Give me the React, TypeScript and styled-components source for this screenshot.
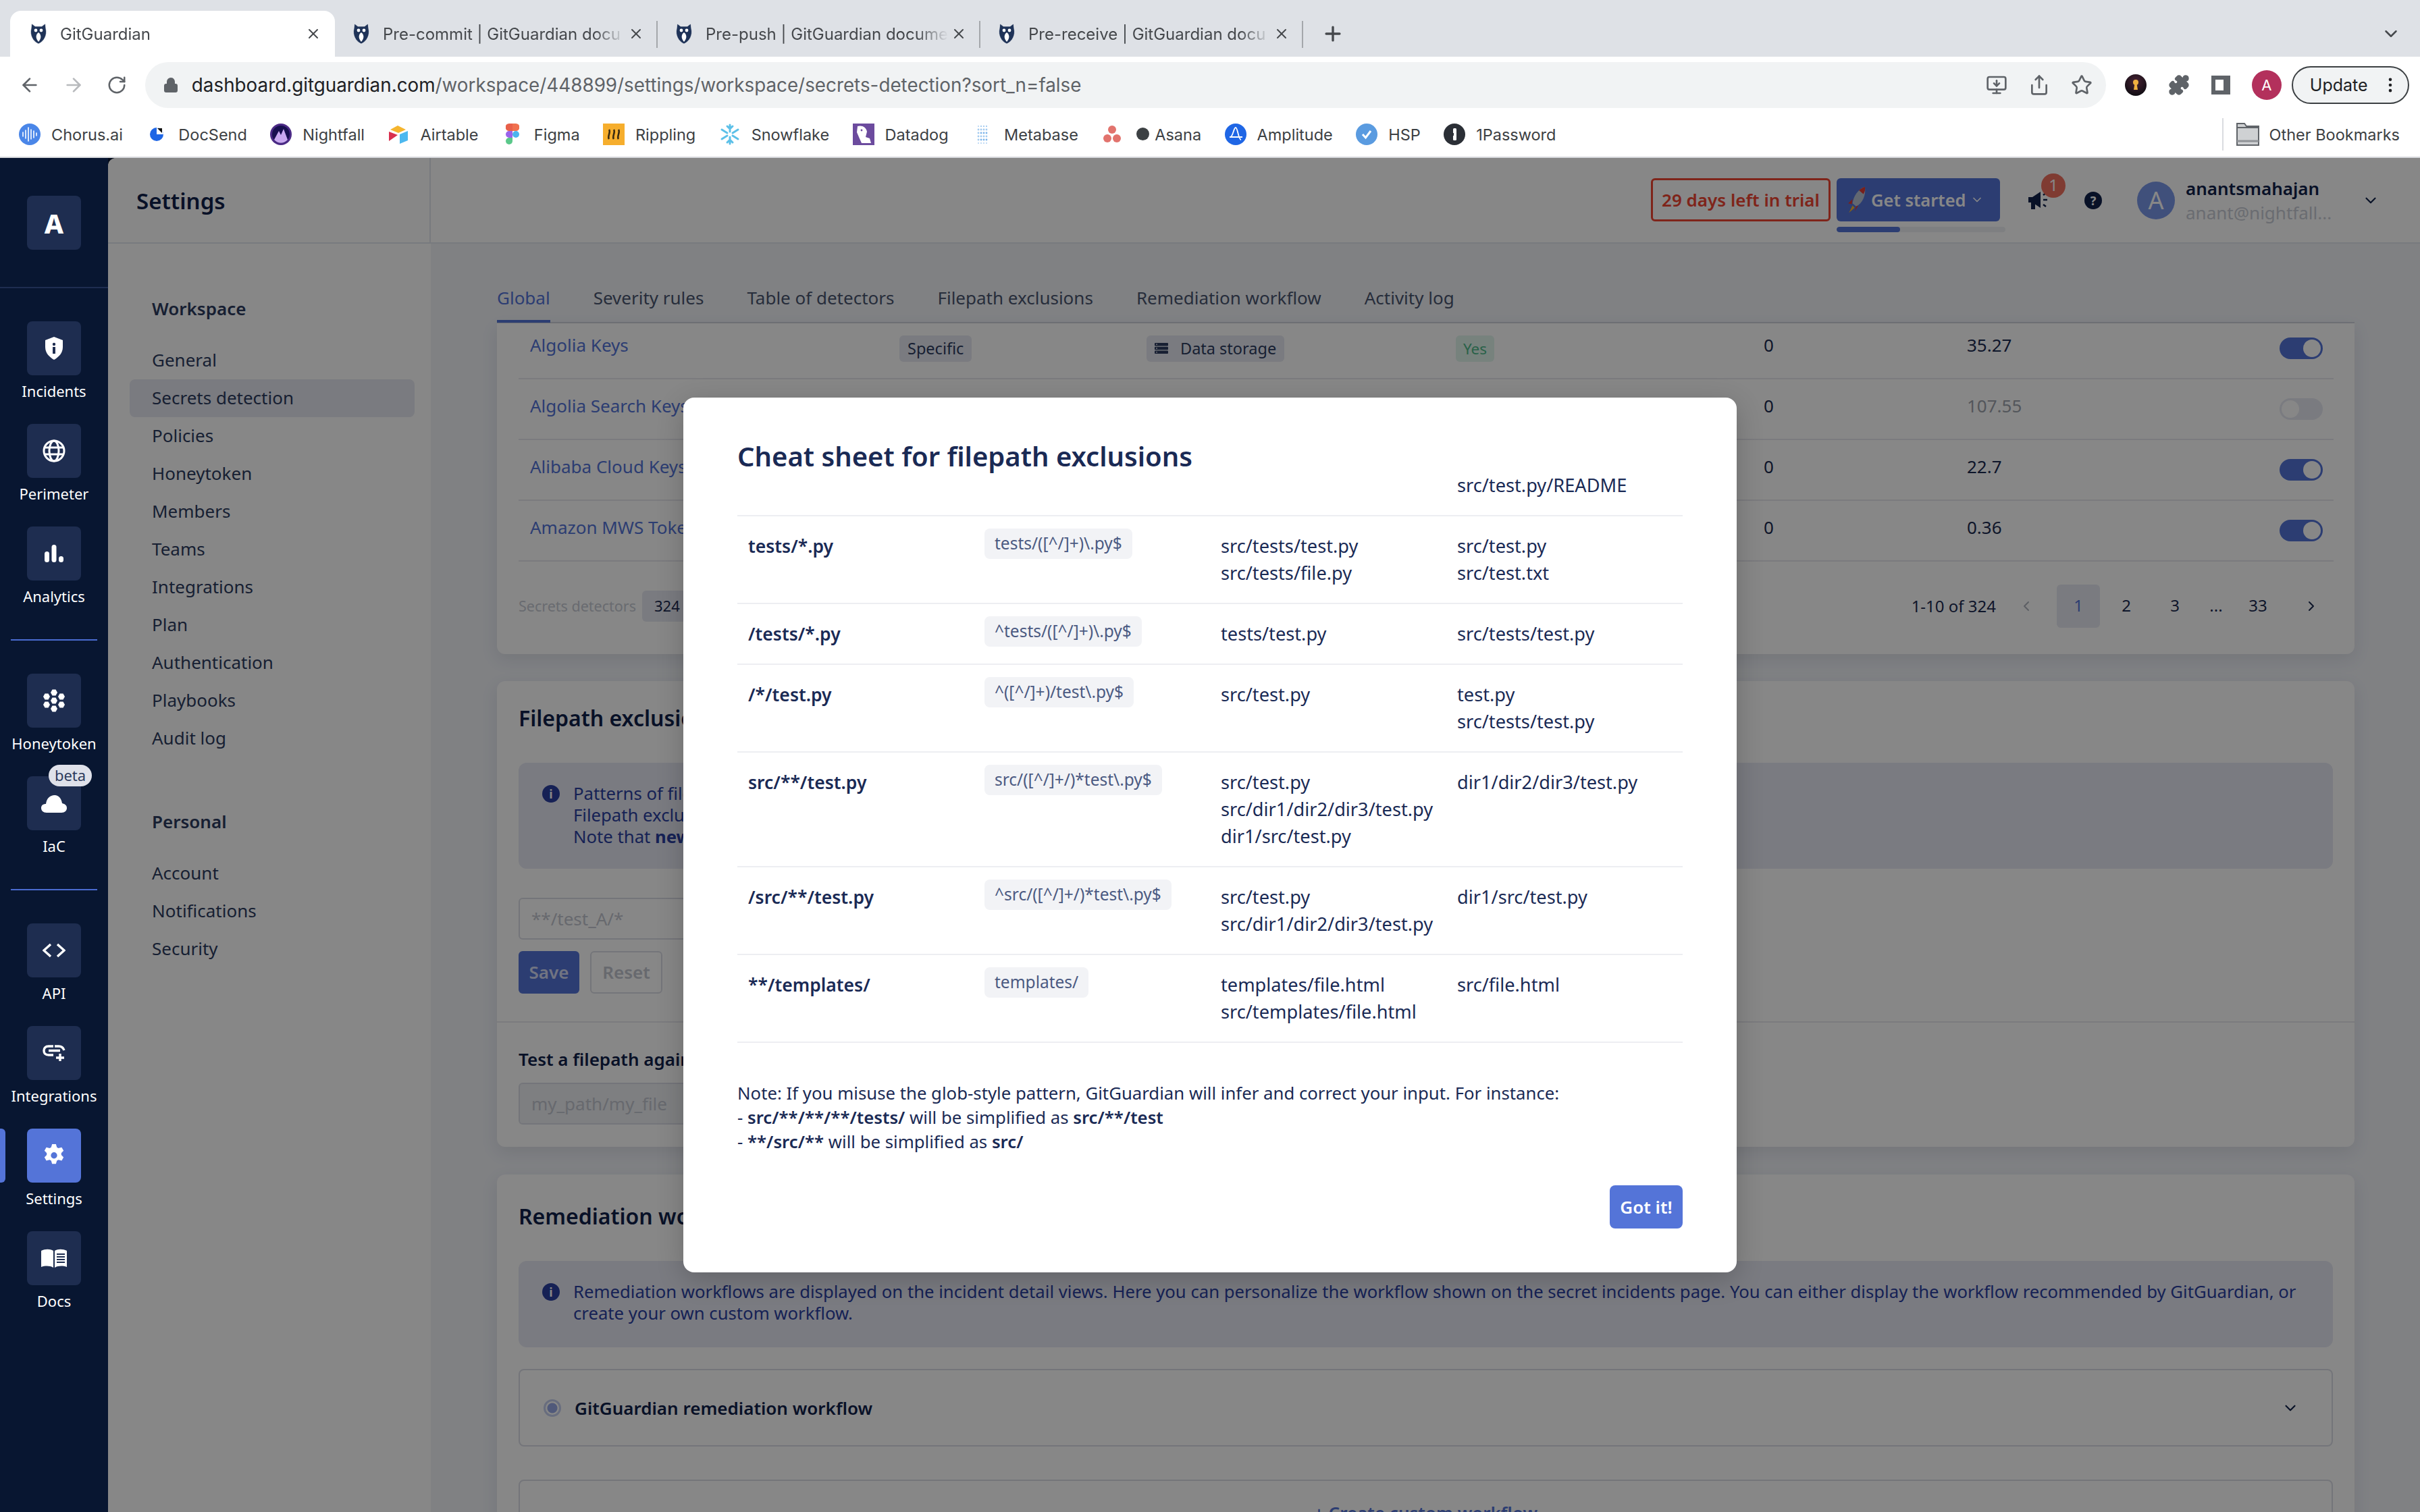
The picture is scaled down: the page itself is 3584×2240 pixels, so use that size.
import * as React from 'react';
import styled, { createGlobalStyle } from 'styled-components';
import { ArrowLeft, ArrowRight, RotateCw, Lock, X, Plus, ChevronDown, ChevronLeft, ChevronRight, Star, Share, MonitorDown, Puzzle, MoreVertical } from 'lucide-react';

const Global = createGlobalStyle`
  html, body { margin: 0; padding: 0; background: #fff; }
  * { box-sizing: border-box; }
`;

const sans = `"Noto Sans", "Open Sans", sans-serif`;
const chromeFont = `Inter, "Liberation Sans", sans-serif`;

const Page = styled.div`
  width: 3584px;
  height: 2240px;
  overflow: hidden;
  display: flex;
  flex-direction: column;
  font-family: ${sans};
`;

/* browser chrome */
const TabStrip = styled.div`
  height: 84px;
  background: #dee1e6;
  padding: 16px 28px 0 15px;
  display: flex;
  align-items: stretch;
  flex-shrink: 0;
`;
const Tab = styled.div<{ $active?: boolean; $sep?: boolean }>`
  position: relative;
  width: ${(p) => (p.$active ? '481px' : '478px')};
  display: flex;
  align-items: center;
  padding: 0 20px 0 ${(p) => (p.$active ? '29px' : '26px')};
  font: 24px ${chromeFont};
  color: #45484c;
  background: ${(p) => (p.$active ? '#fff' : 'transparent')};
  border-radius: 16px 16px 0 0;
  ${(p) => p.$sep && `
    &::after {
      content: '';
      position: absolute;
      right: 0;
      top: 15px;
      height: 40px;
      width: 2px;
      background: #a4a7ab;
    }
  `}
`;
const TabTitle = styled.span`
  flex: 1;
  margin-left: 19px;
  white-space: nowrap;
  -webkit-mask-image: linear-gradient(90deg, #000 86%, transparent 99%);
`;
const NewTab = styled.div`
  width: 90px;
  display: flex;
  align-items: center;
  padding-left: 27px;
  color: #45484c;
`;
const TabListEnd = styled.div`
  margin-left: auto;
  display: flex;
  align-items: center;
  color: #45484c;
`;

const Toolbar = styled.div`
  height: 76px;
  background: #fff;
  padding: 8px 16px 8px 28px;
  display: flex;
  align-items: flex-start;
  flex-shrink: 0;
`;
const NavButtons = styled.div`
  width: 188px;
  height: 68px;
  display: flex;
  align-items: center;
  gap: 33px;
  color: #5f6368;
`;
const Omnibox = styled.div`
  flex: 0 0 2904px;
  height: 68px;
  border-radius: 34px;
  background: #f1f3f4;
  display: flex;
  align-items: center;
  padding: 0 20px 0 26px;
  color: #5f6368;
  font: 27.8px ${chromeFont};
`;
const UrlText = styled.div`
  margin-left: 19px;
  flex: 1;
  white-space: nowrap;
  color: #5f6368;
  b {
    font-weight: 400;
    color: #202124;
  }
`;
const OmniIcons = styled.div`
  display: flex;
  align-items: center;
  gap: 31px;
`;
const ToolIcons = styled.div`
  height: 68px;
  margin-left: 28px;
  display: flex;
  align-items: center;
  gap: 32px;
  color: #5f6368;
`;
const PanelIcon = styled.div`
  width: 28px;
  height: 28px;
  border: 6px solid #5f6368;
  border-right-width: 10px;
  background: #fff;
`;
const ChromeAvatar = styled.div`
  width: 44px;
  height: 44px;
  border-radius: 50%;
  background: #b3305c;
  color: #fff;
  display: flex;
  align-items: center;
  justify-content: center;
  font: 22px ${chromeFont};
`;
const UpdatePill = styled.div`
  height: 56px;
  width: 175px;
  margin: 6px 0 0 15px;
  border: 2px solid #3c4043;
  border-radius: 28px;
  background: #f1f3f4;
  display: flex;
  align-items: center;
  justify-content: space-between;
  padding: 0 12px 0 25px;
  font: 25px ${chromeFont};
  color: #202124;
`;

const Bookmarks = styled.div`
  height: 74px;
  padding: 6px 30px 0 28px;
  background: #fff;
  border-bottom: 2px solid #d6d8dc;
  display: flex;
  align-items: center;
  font: 23.5px ${chromeFont};
  color: #3c4043;
  flex-shrink: 0;
`;
const Bookmark = styled.div`
  display: flex;
  align-items: center;
  gap: 16px;
  margin-right: 34.4px;
  white-space: nowrap;
`;
const IconSlot = styled.span`
  width: 32px;
  height: 32px;
  display: flex;
  align-items: center;
  justify-content: center;
`;
const OtherBookmarks = styled.div`
  margin-left: auto;
  height: 48px;
  padding-left: 19px;
  border-left: 2px solid #dadce0;
  display: flex;
  align-items: center;
  gap: 15px;
  white-space: nowrap;
`;

/* app */
const Body = styled.div`
  flex: 1;
  min-height: 0;
  position: relative;
  display: flex;
  background: #081631;
`;
const Sidebar = styled.nav`
  width: 160px;
  flex-shrink: 0;
  position: relative;
  z-index: 3;
  background: #081631;
`;
const LogoArea = styled.div`
  height: 193px;
  padding-top: 56px;
  display: flex;
  justify-content: center;
  border-bottom: 2px solid #1e2d50;
`;
const LogoBox = styled.div`
  width: 80px;
  height: 80px;
  border-radius: 8px;
  background: #1e2d50;
  color: #fff;
  display: flex;
  align-items: center;
  justify-content: center;
  font: 800 40px ${sans};
`;
const SideGroup = styled.div<{ $last?: boolean }>`
  padding: 49px 0 41px;
  display: flex;
  flex-direction: column;
  gap: 24px;
  position: relative;
  ${(p) => !p.$last && `
    &::after {
      content: '';
      position: absolute;
      left: 16px;
      right: 16px;
      bottom: 0;
      height: 2px;
      background: #4a6bd0;
    }
  `}
`;
const SideItem = styled.a`
  position: relative;
  height: 128px;
  display: flex;
  flex-direction: column;
  align-items: center;
`;
const SideIcon = styled.div<{ $active?: boolean }>`
  width: 80px;
  height: 80px;
  border-radius: 8px;
  background: ${(p) => (p.$active ? '#5474d8' : '#1e2d50')};
  display: flex;
  align-items: center;
  justify-content: center;
  color: #fff;
`;
const SideLabel = styled.span`
  height: 48px;
  line-height: 46px;
  font-size: 22px;
  color: #fff;
  white-space: nowrap;
`;
const ActiveMark = styled.span`
  position: absolute;
  left: 0;
  top: 0;
  width: 8px;
  height: 80px;
  border-radius: 0 6px 6px 0;
  background: #5474d8;
`;
const BetaBadge = styled.span`
  position: absolute;
  top: -17px;
  right: 24px;
  width: 64px;
  height: 32px;
  border-radius: 16px;
  background: #dfe1ea;
  color: #2c3a5c;
  font-size: 22px;
  line-height: 30px;
  text-align: center;
`;

const Main = styled.div`
  flex: 1;
  min-width: 0;
  display: flex;
  flex-direction: column;
  background: #f1f3f8;
  border-radius: 12px 0 0 0;
  overflow: hidden;
`;
const TopBar = styled.header`
  height: 127px;
  flex-shrink: 0;
  display: flex;
  background: #fff;
  border-bottom: 2px solid #e3e6ee;
`;
const TopBarTitle = styled.div`
  width: 478px;
  border-right: 2px solid #e3e6ee;
  padding: 2px 0 0 42px;
  display: flex;
  align-items: center;
  font-weight: 600;
  font-size: 33px;
  color: #10214a;
`;
const TopBarRight = styled.div`
  flex: 1;
  position: relative;
  display: flex;
  align-items: center;
  padding: 0 34px 0 1807px;
`;
const TrialBox = styled.div`
  width: 266px;
  height: 64px;
  margin-top: -1px;
  border: 3px solid #f04432;
  border-radius: 6px;
  color: #f04432;
  font-weight: 600;
  font-size: 26px;
  display: flex;
  align-items: center;
  justify-content: center;
  white-space: nowrap;
`;
const StartWrap = styled.div`
  position: relative;
  margin-left: 9px;
  width: 242px;
  height: 64px;
  margin-top: -1px;
`;
const StartButton = styled.div`
  height: 64px;
  border-radius: 6px;
  background: #5474d8;
  color: #fff;
  font-weight: 600;
  font-size: 25.5px;
  display: flex;
  align-items: center;
  padding-left: 15px;
  gap: 6px;
  white-space: nowrap;
`;
const Progress = styled.div`
  position: absolute;
  left: 0;
  top: 72px;
  width: 250px;
  height: 8px;
  border-radius: 4px;
  overflow: hidden;
  background: #eef0f3;
`;
const ProgressFill = styled.div`
  height: 100%;
  background: #5474d8;
  border-radius: 4px;
`;
const Megaphone = styled.div`
  position: relative;
  margin-left: 42px;
  color: #10214a;
  display: flex;
`;
const CountBadge = styled.span`
  position: absolute;
  left: 19px;
  top: -26px;
  width: 36px;
  height: 36px;
  border-radius: 50%;
  background: #f0705f;
  color: #fff;
  font-size: 24px;
  line-height: 34px;
  text-align: center;
`;
const HelpDot = styled.div`
  margin-left: 53px;
  width: 26px;
  height: 26px;
  border-radius: 50%;
  background: #10214a;
  color: #fff;
  font-weight: 700;
  font-size: 18px;
  line-height: 26px;
  text-align: center;
`;
const UserAvatar = styled.div`
  margin-left: 52px;
  width: 56px;
  height: 56px;
  border-radius: 50%;
  background: #7a97e8;
  color: #fff;
  font-size: 36px;
  line-height: 56px;
  text-align: center;
`;
const UserText = styled.div`
  margin-left: 16px;
  width: 261px;
  line-height: 36px;
  white-space: nowrap;
`;
const UserName = styled.div`
  font-weight: 600;
  font-size: 26px;
  color: #10214a;
`;
const UserMail = styled.div`
  font-size: 26px;
  color: #c8ccd6;
`;

const Columns = styled.div`
  flex: 1;
  min-height: 0;
  display: flex;
`;
const SideMenu = styled.aside`
  width: 478px;
  flex-shrink: 0;
  background: #fff;
  padding: 69px 24px 0 32px;
`;
const MenuHeading = styled.div<{ $gap?: boolean }>`
  height: 56px;
  line-height: 54px;
  padding-left: 33px;
  margin: ${(p) => (p.$gap ? '68px' : '0')} 0 20px;
  font-weight: 600;
  font-size: 26px;
  color: #2d3c5f;
`;
const MenuItem = styled.div<{ $active?: boolean }>`
  height: 56px;
  line-height: 54px;
  padding-left: 33px;
  border-radius: 8px;
  font-size: 26px;
  color: #2d3c5f;
  background: ${(p) => (p.$active ? '#e6e8f1' : 'transparent')};
`;
const Content = styled.div`
  flex: 1;
  min-width: 0;
  padding: 0 97px 0 98px;
  background: #f1f3f8;
`;
const TabsBar = styled.div`
  height: 118px;
  display: flex;
  align-items: flex-end;
  gap: 64px;
  border-bottom: 2px solid #d3d6df;
`;
const PageTab = styled.div<{ $active?: boolean }>`
  height: 59px;
  line-height: 44px;
  margin-bottom: -1px;
  font-size: 26px;
  white-space: nowrap;
  color: ${(p) => (p.$active ? '#5474d8' : '#4a5670')};
  border-bottom: 4px solid ${(p) => (p.$active ? '#5474d8' : 'transparent')};
`;
const Card = styled.section`
  background: #fff;
  border-radius: 12px;
  box-shadow: 0 8px 24px rgba(30, 45, 80, 0.1);
`;
const RulesCard = styled(Card)`
  height: 490px;
  padding: 0 31px 0 32px;
  border-radius: 0 0 12px 12px;
  overflow: hidden;
`;
const RowsClip = styled.div`
  margin-top: -7px;
`;
const Row = styled.div`
  height: 90px;
  display: grid;
  grid-template-columns: 564px 366px 462px 452px 301px 1fr auto;
  align-items: center;
  border-bottom: 2px solid #e8e9ee;
  padding-right: 16px;
  font-size: 26px;
  color: #1b2a50;
`;
const Cell = styled.div<{ $muted?: boolean }>`
  padding-bottom: 10px;
  white-space: nowrap;
  color: ${(p) => (p.$muted ? '#9ea3ad' : 'inherit')};
`;
const NameCell = styled(Cell)`
  padding-left: 17px;
  color: #5474d8;
`;
const TagCell = styled.div``;
const Tag = styled.span<{ $green?: boolean }>`
  display: inline-flex;
  align-items: center;
  gap: 18px;
  height: 39px;
  padding: 0 ${(p) => (p.$green ? '11px' : '12px')};
  margin-left: ${(p) => (p.$green ? '-4px' : '0')};
  border-radius: 6px;
  font-size: ${(p) => (p.$green ? '22.5px' : '23.5px')};
  background: ${(p) => (p.$green ? '#e0f5ec' : '#e6e8f1')};
  color: ${(p) => (p.$green ? '#4fb98a' : '#2d3c5f')};
`;
const Toggle = styled.div<{ $on?: boolean }>`
  width: 64px;
  height: 32px;
  padding: 3px;
  border-radius: 16px;
  display: flex;
  justify-content: ${(p) => (p.$on ? 'flex-end' : 'flex-start')};
  background: ${(p) => (p.$on ? '#5474d8' : '#e6e8f1')};
  &::after {
    content: '';
    width: 26px;
    height: 26px;
    border-radius: 50%;
    background: #fff;
  }
`;
const Pager = styled.div`
  height: 137px;
  padding-bottom: 6px;
  display: flex;
  align-items: center;
  font-size: 24px;
  color: #1b2a50;
`;
const PagerLabel = styled.span`
  font-size: 21.5px;
  color: #c6cad3;
`;
const CountChip = styled.span`
  margin-left: 9px;
  height: 46px;
  width: 100px;
  padding-left: 18px;
  line-height: 44px;
  border-radius: 6px;
  background: #e6e8f1;
  font-size: 22px;
`;
const PagerNav = styled.div`
  margin-left: auto;
  margin-right: -12px;
  display: flex;
  align-items: center;
`;
const PageNum = styled.span<{ $active?: boolean; $w: number }>`
  width: ${(p) => p.$w}px;
  height: 64px;
  line-height: 62px;
  text-align: center;
  border-radius: 6px;
  background: ${(p) => (p.$active ? '#e6e8f1' : 'transparent')};
  color: ${(p) => (p.$active ? '#5474d8' : 'inherit')};
`;
const PagerArrow = styled.span<{ $w: number; $dim?: boolean }>`
  width: ${(p) => p.$w}px;
  display: flex;
  justify-content: center;
  color: ${(p) => (p.$dim ? '#b0b4be' : 'inherit')};
`;

const ExclusionsCard = styled(Card)`
  margin-top: 40px;
  height: 690px;
`;
const CardBlock = styled.div`
  padding: 0 32px;
`;
const SectionTitle = styled.h2<{ $pt: number }>`
  margin: 0;
  padding-top: ${(p) => p.$pt}px;
  height: ${(p) => p.$pt + 90}px;
  line-height: 48px;
  font-weight: 600;
  font-size: 32px;
  color: #10214a;
  white-space: nowrap;
`;
const InfoBox = styled.div<{ $h: number }>`
  height: ${(p) => p.$h}px;
  border-radius: 12px;
  background: #e6e8f3;
  padding: 30px 32px 0 35px;
  display: flex;
  gap: 20px;
  font-size: 25.7px;
  line-height: 32px;
  color: #2a3fa0;
  strong {
    font-weight: 700;
  }
`;
const InfoDot = styled.span`
  flex-shrink: 0;
  margin-top: 3px;
  width: 26px;
  height: 26px;
  border-radius: 50%;
  background: #2a3fa0;
  color: #fff;
  font-size: 18px;
  font-weight: 700;
  line-height: 26px;
  text-align: center;
`;
const TextField = styled.div<{ $filled?: boolean }>`
  width: 1200px;
  height: 62px;
  padding-left: 17px;
  line-height: 58px;
  border: 2px solid #dcdee6;
  border-radius: 6px;
  font-size: 26px;
  color: #c3c6d0;
  background: ${(p) => (p.$filled ? '#eef0f4' : '#fff')};
`;
const FieldSpacer = styled.div`
  height: 43px;
`;
const Buttons = styled.div`
  display: flex;
  gap: 16px;
  margin-top: 17px;
`;
const FormButton = styled.div<{ $primary?: boolean }>`
  height: 63px;
  width: ${(p) => (p.$primary ? '90px' : '107px')};
  border-radius: 6px;
  font-size: 26px;
  font-weight: 600;
  line-height: 59px;
  text-align: center;
  color: ${(p) => (p.$primary ? '#d5dcf5' : '#c3c6d0')};
  background: ${(p) => (p.$primary ? '#5474d8' : '#fff')};
  border: 2px solid ${(p) => (p.$primary ? '#5474d8' : '#dcdee6')};
`;
const Divider = styled.div`
  margin-top: 41px;
  height: 2px;
  background: #e8e9ee;
`;
const FieldTitle = styled.div`
  margin-top: 32px;
  height: 44px;
  line-height: 44px;
  margin-bottom: 13px;
  font-weight: 600;
  font-size: 26px;
  color: #10214a;
`;
const WorkflowCard = styled(Card)`
  margin-top: 41px;
  height: 600px;
`;
const WorkflowBox = styled.div`
  margin-top: 32px;
  height: 115px;
  border: 2px solid #dcdee6;
  border-radius: 8px;
  display: flex;
  align-items: center;
  gap: 20px;
  padding: 0 48px 0 35px;
  font-weight: 600;
  font-size: 26px;
  color: #10214a;
  svg:last-child {
    margin-left: auto;
  }
`;
const CreateBox = styled.div`
  margin-top: 49px;
  height: 115px;
  border: 2px solid #dcdee6;
  border-radius: 8px;
  padding-top: 29px;
  text-align: center;
  font-weight: 600;
  font-size: 26px;
  color: #5474d8;
`;
const RadioMark = styled.span`
  width: 26px;
  height: 26px;
  border-radius: 50%;
  border: 3px solid #c5cfee;
  background: radial-gradient(circle, #98a9e6 0 7px, #fff 8px);
`;

/* modal */
const Overlay = styled.div`
  position: absolute;
  inset: 0;
  z-index: 2;
  background: rgba(0, 0, 0, 0.47);
  display: flex;
  align-items: center;
  justify-content: center;
`;
const Modal = styled.div`
  width: 1560px;
  height: 1296px;
  padding: 64px 80px;
  border-radius: 16px;
  background: #fff;
  color: #1a2a55;
  box-shadow: 0 10px 40px rgba(0, 0, 0, 0.2);
`;
const ModalTitle = styled.h2`
  margin: 0;
  height: 46px;
  line-height: 46px;
  font-size: 40px;
  font-weight: 600;
  color: #1a2a55;
`;
const SheetRow = styled.div`
  display: grid;
  grid-template-columns: repeat(4, 350px);
  padding-bottom: 24px;
  border-bottom: 2px solid #edeef2;
  font-size: 27.2px;
  line-height: 40px;
  & + & {
    padding-top: 24px;
  }
`;
const Pattern = styled.div`
  padding-left: 16px;
  font-size: 26.5px;
  font-weight: 600;
`;
const RegexCell = styled.div`
  padding-left: 16px;
`;
const Regex = styled.code`
  display: inline-block;
  margin-top: -6px;
  height: 45px;
  padding: 0 15px;
  line-height: 44px;
  border-radius: 8px;
  background: #f2f3f6;
  font-family: ${sans};
  font-size: 24.5px;
  color: #4b5a82;
  vertical-align: top;
`;
const PathCell = styled.div`
  padding-left: 16px;
  white-space: nowrap;
`;
const Note = styled.div`
  margin-top: 56px;
  font-size: 25.75px;
  line-height: 36px;
  strong {
    font-weight: 600;
  }
`;
const ModalFooter = styled.div`
  margin-top: 47px;
  display: flex;
  justify-content: flex-end;
`;
const GotIt = styled.button`
  width: 108px;
  height: 64px;
  border: 0;
  border-radius: 8px;
  background: #5474d8;
  color: #fff;
  font-family: ${sans};
  font-size: 26px;
  font-weight: 600;
`;

const Owl = () => (
  <svg width="26" height="30" viewBox="0 0 26 30">
    <path d="M3 0 L8 4 H18 L23 0 L24 8 C26 16 22 26 13 30 C4 26 0 16 2 8Z" fill="#1f3358" stroke="#fff" strokeWidth="0.6" />
    <path d="M13 13 C9 16 8 21 13 27 C18 21 17 16 13 13Z" fill="#fff" />
    <circle cx="9" cy="10" r="2.4" fill="#fff" />
    <circle cx="17" cy="10" r="2.4" fill="#fff" />
  </svg>
);

const ChorusIcon = () => (
  <svg width="32" height="32" viewBox="0 0 32 32">
    <circle cx="16" cy="16" r="16" fill="#4a86e8" />
    <path d="M6 13v6M10 10v12M14 6v20M18 9v14M22 11v10M26 14v4" stroke="#fff" strokeWidth="1.6" strokeLinecap="round" />
  </svg>
);
const DocSendIcon = () => (
  <svg width="20" height="32" viewBox="0 0 20 32">
    <circle cx="10" cy="16" r="10" fill="#1f66e5" />
    <path d="M10 6a10 10 0 0 1 10 10H10z" fill="#fff" />
    <path d="M11 7h7v7z" fill="#111" />
  </svg>
);
const NightfallIcon = () => (
  <svg width="32" height="32" viewBox="0 0 32 32">
    <circle cx="16" cy="16" r="16" fill="#4b2a86" />
    <circle cx="16" cy="16" r="13" fill="#181050" />
    <path d="M6 24 L13 11 L16 17 L20 8 L26 24 A13 13 0 0 1 6 24Z" fill="#c8a8f0" />
  </svg>
);
const AirtableIcon = () => (
  <svg width="30" height="32" viewBox="0 0 30 32">
    <path d="M14 3 L26 9 L15 14 L3 9Z" fill="#f5b52e" />
    <path d="M17 16 L29 11 V25 L17 30Z" fill="#4cb8ef" />
    <path d="M1 12 L14 17 L1 26Z" fill="#d9304f" />
  </svg>
);
const FigmaIcon = () => (
  <svg width="20" height="32" viewBox="0 0 20 32">
    <path d="M10 0H5a5 5 0 0 0 0 11h5z" fill="#e8604a" />
    <path d="M10 0h5a5 5 0 0 1 0 11h-5z" fill="#f0704f" />
    <path d="M10 11H5a5 5 0 0 0 0 10h5z" fill="#9a63ea" />
    <circle cx="15" cy="16" r="5" fill="#4ab4ee" />
    <path d="M5 21h5v5a5 5 0 1 1-5-5z" fill="#5ac88a" />
  </svg>
);
const RipplingIcon = () => (
  <svg width="32" height="32" viewBox="0 0 32 32">
    <rect width="32" height="32" fill="#f6ae2d" />
    <path d="M9 9c3 4-3 10 0 14M16 9c3 4-3 10 0 14M23 9c3 4-3 10 0 14" stroke="#3a2a10" strokeWidth="2.6" fill="none" />
  </svg>
);
const SnowIcon = () => (
  <svg width="32" height="32" viewBox="0 0 32 32" stroke="#5cc0e8" strokeWidth="3" strokeLinecap="round" fill="none">
    <path d="M16 2v10M16 20v10M4 9l8 5M20 18l8 5M4 23l8-5M20 14l8-5M12 4l4 4 4-4M12 28l4-4 4 4" />
  </svg>
);
const DatadogIcon = () => (
  <svg width="32" height="32" viewBox="0 0 32 32">
    <rect width="32" height="32" fill="#6c4b9e" />
    <path d="M7 4 C13 2 20 5 21 12 L19 20 L25 22 L27 29 H13 L9 20 L6 13Z" fill="#fff" />
    <circle cx="13" cy="10" r="1.4" fill="#6c4b9e" />
  </svg>
);
const MetabaseIcon = () => (
  <svg width="16" height="32" viewBox="0 0 16 32" fill="#7db5ea">
    {[0, 1, 2, 3].map((c) =>
      [0, 1, 2, 3, 4, 5].map((r) => (
        <circle key={`${c}-${r}`} cx={2 + c * 4} cy={4 + r * 5} r={r === 0 || r === 5 ? 0.9 : 1.4} opacity={c === 0 || r % 2 ? 0.7 : 1} />
      ))
    )}
  </svg>
);
const AsanaIcon = () => (
  <svg width="26" height="32" viewBox="0 0 26 32" fill="#e2736d">
    <circle cx="13" cy="9" r="6" />
    <circle cx="6" cy="22" r="6" />
    <circle cx="20" cy="22" r="6" />
  </svg>
);
const AsanaDot = styled.span`
  display: inline-block;
  width: 19px;
  height: 19px;
  margin: 0 8px 0 4px;
  border-radius: 50%;
  background: #3c4043;
`;
const AmplitudeIcon = () => (
  <svg width="32" height="32" viewBox="0 0 32 32">
    <circle cx="16" cy="16" r="16" fill="#1f66e5" />
    <path d="M7 20 H26 M8 20 C12 20 13 6 16 6 C19 6 20 24 24 24" stroke="#fff" strokeWidth="1.8" fill="none" />
  </svg>
);
const HspIcon = () => (
  <svg width="32" height="32" viewBox="0 0 32 32">
    <circle cx="16" cy="16" r="16" fill="#5a9be0" />
    <path d="M10 16 L14.5 21 L22 11" stroke="#fff" strokeWidth="3" fill="none" />
  </svg>
);
const OnePassIcon = () => (
  <svg width="32" height="32" viewBox="0 0 32 32">
    <circle cx="16" cy="16" r="16" fill="#2b2f36" />
    <rect x="14" y="7" width="5" height="18" rx="1.5" fill="#fff" />
    <rect x="11" y="14" width="4" height="4" fill="#2b2f36" />
  </svg>
);
const FolderIcon = () => (
  <svg width="34" height="36" viewBox="0 0 34 36">
    <path d="M1 2h11l3 4h18v28H1z" fill="#cfd1d3" stroke="#5f6368" strokeWidth="2" />
    <path d="M1 8h32" stroke="#5f6368" strokeWidth="2" />
    <path d="M1 28h32" stroke="#8f9296" strokeWidth="3" />
  </svg>
);
const KeyExtIcon = () => (
  <svg width="32" height="32" viewBox="0 0 32 32">
    <defs>
      <radialGradient id="keybg" cx="50%" cy="35%" r="70%">
        <stop offset="0" stopColor="#4a2436" />
        <stop offset="1" stopColor="#0a0a0f" />
      </radialGradient>
    </defs>
    <circle cx="16" cy="16" r="16" fill="url(#keybg)" />
    <circle cx="16" cy="12" r="4" fill="#f0b040" />
    <path d="M14.500 14h3l1.500 9h-6z" fill="#f0b040" />
  </svg>
);

const ShieldIcon = () => (
  <svg width="28" height="34" viewBox="0 0 28 34">
    <path d="M14 0 L27 5 V15 C27 24 21 30 14 34 C7 30 1 24 1 15 V5Z" fill="#fff" />
    <circle cx="14" cy="11" r="2.2" fill="#1e2d50" />
    <rect x="12" y="15" width="4" height="10" fill="#1e2d50" />
  </svg>
);
const GlobeIcon = () => (
  <svg width="34" height="34" viewBox="0 0 34 34" fill="none" stroke="#fff" strokeWidth="3">
    <circle cx="17" cy="17" r="15" />
    <ellipse cx="17" cy="17" rx="7" ry="15" />
    <path d="M3 12h28M3 22h28" />
  </svg>
);
const BarsIcon = () => (
  <svg width="28" height="26" viewBox="0 0 28 26" fill="#fff">
    <rect x="0" y="10" width="7" height="16" rx="3.5" />
    <rect x="10.5" y="0" width="7" height="26" rx="3.5" />
    <rect x="21" y="17" width="7" height="9" rx="3.5" />
  </svg>
);
const HexIcon = () => (
  <svg width="34" height="34" viewBox="0 0 34 34" fill="#fff">
    {[[17, 5], [17, 17], [17, 29], [6, 11], [28, 11], [6, 23], [28, 23]].map(([x, y]) => (
      <path key={`${x}-${y}`} d={`M${x - 5} ${y} L${x - 2.5} ${y - 4.6} H${x + 2.5} L${x + 5} ${y} L${x + 2.5} ${y + 4.6} H${x - 2.5}Z`} />
    ))}
  </svg>
);
const CloudIcon = () => (
  <svg width="38" height="28" viewBox="0 0 38 28" fill="#fff">
    <path d="M8 28 C3 28 0 25 0 21 C0 17 3 15 7 15 C8 7 13 2 20 2 C26 2 30 7 31 14 C35 15 38 17 38 21 C38 25 35 28 30 28Z" />
  </svg>
);
const CodeIcon = () => (
  <svg width="34" height="24" viewBox="0 0 34 24" fill="none" stroke="#fff" strokeWidth="3.4">
    <path d="M12 3 L2 12 L12 21 M22 3 L32 12 L22 21" />
  </svg>
);
const LinkPlusIcon = () => (
  <svg width="34" height="28" viewBox="0 0 34 28" fill="none" stroke="#fff" strokeWidth="3.4">
    <path d="M16 4 H9 C4 4 2 7 2 10.5 C2 14 4 17 9 17 H16 M9 10.5 H26 M18 4 H24 C29 4 31 7 32 10 M26 15 V26 M20 21 H32" />
  </svg>
);
const GearIcon = () => (
  <svg width="34" height="34" viewBox="0 0 24 24" fill="#fff">
    <path fillRule="evenodd" d="M10 0h4l1 3.4 1.600.9 3.400-.9 2 3.500-2.400 2.500v1.900l2.400 2.500-2 3.500-3.400-.9-1.600.9-1 3.400h-4l-1-3.400-1.600-.9-3.400.9-2-3.500 2.400-2.500V9.400L2 6.900l2-3.500 3.400.9 1.600-.9zM12 8.500a3.300 3.300 0 1 0 0 6.600 3.300 3.300 0 0 0 0-6.600z" />
  </svg>
);
const BookIcon = () => (
  <svg width="38" height="28" viewBox="0 0 38 28">
    <path d="M0 3 C6 0 13 0 18 3 V28 C13 25 6 25 0 27Z" fill="#fff" />
    <path d="M20 3 C25 0 32 0 38 3 V27 C32 25 25 25 20 28Z" fill="#fff" />
    <path d="M23 8h12M23 12h12M23 16h12M23 20h12" stroke="#1e2d50" strokeWidth="1.8" />
  </svg>
);
const MegaphoneIcon = () => (
  <svg width="30" height="28" viewBox="0 0 30 28" fill="#10214a">
    <path d="M0 9h6L18 1v24L6 17H0z" />
    <rect x="4" y="17" width="6" height="10" />
    <path d="M22 6l4-3M22 13h6M22 20l4 3" stroke="#10214a" strokeWidth="2.5" />
  </svg>
);
const RocketIcon = () => (
  <svg width="30" height="42" viewBox="0 0 28 38">
    <path d="M25 1 C16 4 9 14 8 24 L13 28 C22 24 27 12 25 1Z" fill="#b9c4d6" />
    <path d="M25 1 C22 2 19 4 17 6 L23 11 C25 8 26 5 25 1Z" fill="#e23c35" />
    <path d="M8 18 L2 24 L7 25Z M13 28 L11 35 L16 27Z" fill="#e23c35" />
    <path d="M8 27 L3 37 L11 30Z" fill="#f5b52e" />
  </svg>
);
const ServerIcon = () => (
  <svg width="20" height="16" viewBox="0 0 20 16" fill="#2d3c5f">
    <rect y="0" width="20" height="4.4" rx="1" />
    <rect y="5.8" width="20" height="4.4" rx="1" />
    <rect y="11.6" width="20" height="4.4" rx="1" />
    <circle cx="3" cy="2.200" r="0.9" fill="#e6e8f1" />
    <circle cx="3" cy="8" r="0.9" fill="#e6e8f1" />
    <circle cx="3" cy="13.800" r="0.9" fill="#e6e8f1" />
  </svg>
);

const bookmarks: [string, React.ReactNode][] = [
  ['Chorus.ai', <ChorusIcon key="a" />],
  ['DocSend', <DocSendIcon key="b" />],
  ['Nightfall', <NightfallIcon key="c" />],
  ['Airtable', <AirtableIcon key="d" />],
  ['Figma', <FigmaIcon key="e" />],
  ['Rippling', <RipplingIcon key="f" />],
  ['Snowflake', <SnowIcon key="g" />],
  ['Datadog', <DatadogIcon key="h" />],
  ['Metabase', <MetabaseIcon key="i" />],
  ['Asana', <AsanaIcon key="j" />],
  ['Amplitude', <AmplitudeIcon key="k" />],
  ['HSP', <HspIcon key="l" />],
  ['1Password', <OnePassIcon key="m" />],
];

const sideGroups: { label: string; icon: React.ReactNode; active?: boolean; beta?: boolean }[][] = [
  [
    { label: 'Incidents', icon: <ShieldIcon /> },
    { label: 'Perimeter', icon: <GlobeIcon /> },
    { label: 'Analytics', icon: <BarsIcon /> },
  ],
  [
    { label: 'Honeytoken', icon: <HexIcon /> },
    { label: 'IaC', icon: <CloudIcon />, beta: true },
  ],
  [
    { label: 'API', icon: <CodeIcon /> },
    { label: 'Integrations', icon: <LinkPlusIcon /> },
    { label: 'Settings', icon: <GearIcon />, active: true },
    { label: 'Docs', icon: <BookIcon /> },
  ],
];

const workspaceMenu = ['General', 'Secrets detection', 'Policies', 'Honeytoken', 'Members', 'Teams', 'Integrations', 'Plan', 'Authentication', 'Playbooks', 'Audit log'];
const personalMenu = ['Account', 'Notifications', 'Security'];
const pageTabs = ['Global', 'Severity rules', 'Table of detectors', 'Filepath exclusions', 'Remediation workflow', 'Activity log'];

const detectors = [
  { name: 'Algolia Keys', score: '35.27', on: true, tags: true },
  { name: 'Algolia Search Keys', score: '107.55', on: false },
  { name: 'Alibaba Cloud Keys', score: '22.7', on: true },
  { name: 'Amazon MWS Tokens', score: '0.36', on: true },
];

const sheet = [
  { glob: 'tests/*.py', regex: 'tests/([^/]+)\\.py$', hit: ['src/tests/test.py', 'src/tests/file.py'], miss: ['src/test.py', 'src/test.txt'] },
  { glob: '/tests/*.py', regex: '^tests/([^/]+)\\.py$', hit: ['tests/test.py'], miss: ['src/tests/test.py'] },
  { glob: '/*/test.py', regex: '^([^/]+)/test\\.py$', hit: ['src/test.py'], miss: ['test.py', 'src/tests/test.py'] },
  { glob: 'src/**/test.py', regex: 'src/([^/]+/)*test\\.py$', hit: ['src/test.py', 'src/dir1/dir2/dir3/test.py', 'dir1/src/test.py'], miss: ['dir1/dir2/dir3/test.py'] },
  { glob: '/src/**/test.py', regex: '^src/([^/]+/)*test\\.py$', hit: ['src/test.py', 'src/dir1/dir2/dir3/test.py'], miss: ['dir1/src/test.py'] },
  { glob: '**/templates/', regex: 'templates/', hit: ['templates/file.html', 'src/templates/file.html'], miss: ['src/file.html'] },
];

const App: React.FC = () => {
  return (
    <Page>
      <Global />
      <TabStrip>
        <Tab $active><Owl /><TabTitle>GitGuardian</TabTitle><X size={24} /></Tab>
        <Tab $sep><Owl /><TabTitle>Pre-commit | GitGuardian docu</TabTitle><X size={24} /></Tab>
        <Tab $sep><Owl /><TabTitle>Pre-push | GitGuardian docume</TabTitle><X size={24} /></Tab>
        <Tab $sep><Owl /><TabTitle>Pre-receive | GitGuardian docu</TabTitle><X size={24} /></Tab>
        <NewTab><Plus size={34} strokeWidth={2.4} /></NewTab>
        <TabListEnd><ChevronDown size={30} /></TabListEnd>
      </TabStrip>

      <Toolbar>
        <NavButtons>
          <ArrowLeft size={32} />
          <ArrowRight size={32} color="#b8babd" />
          <RotateCw size={30} />
        </NavButtons>
        <Omnibox>
          <Lock size={24} fill="#5f6368" />
          <UrlText><b>dashboard.gitguardian.com</b>/workspace/448899/settings/workspace/secrets-detection?sort_n=false</UrlText>
          <OmniIcons>
            <MonitorDown size={32} />
            <Share size={32} />
            <Star size={32} />
          </OmniIcons>
        </Omnibox>
        <ToolIcons>
          <KeyExtIcon />
          <Puzzle size={32} fill="#5f6368" />
          <PanelIcon />
          <ChromeAvatar>A</ChromeAvatar>
        </ToolIcons>
        <UpdatePill>Update<MoreVertical size={28} /></UpdatePill>
      </Toolbar>

      <Bookmarks>
        {bookmarks.map(([label, icon]) => (
          <Bookmark key={label}>
            <IconSlot>{icon}</IconSlot>
            <span>{label === 'Asana' && <AsanaDot />}{label}</span>
          </Bookmark>
        ))}
        <OtherBookmarks><FolderIcon />Other Bookmarks</OtherBookmarks>
      </Bookmarks>

      <Body>
        <Sidebar>
          <LogoArea><LogoBox>A</LogoBox></LogoArea>
          {sideGroups.map((group, i) => (
            <SideGroup key={i} $last={i === sideGroups.length - 1}>
              {group.map((item) => (
                <SideItem key={item.label}>
                  {item.active && <ActiveMark />}
                  <SideIcon $active={item.active}>{item.icon}</SideIcon>
                  <SideLabel>{item.label}</SideLabel>
                  {item.beta && <BetaBadge>beta</BetaBadge>}
                </SideItem>
              ))}
            </SideGroup>
          ))}
        </Sidebar>

        <Main>
          <TopBar>
            <TopBarTitle>Settings</TopBarTitle>
            <TopBarRight>
              <TrialBox>29 days left in trial</TrialBox>
              <StartWrap>
                <StartButton><RocketIcon />Get started<ChevronDown size={20} /></StartButton>
                <Progress><ProgressFill style={{ width: `${(94 / 250) * 100}%` }} /></Progress>
              </StartWrap>
              <Megaphone><MegaphoneIcon /><CountBadge>1</CountBadge></Megaphone>
              <HelpDot>?</HelpDot>
              <UserAvatar>A</UserAvatar>
              <UserText>
                <UserName>anantsmahajan</UserName>
                <UserMail>anant@nightfall...</UserMail>
              </UserText>
              <ChevronDown size={26} color="#10214a" />
            </TopBarRight>
          </TopBar>
          <Columns>
            <SideMenu>
              <MenuHeading>Workspace</MenuHeading>
              {workspaceMenu.map((m) => (
                <MenuItem key={m} $active={m === 'Secrets detection'}>{m}</MenuItem>
              ))}
              <MenuHeading $gap>Personal</MenuHeading>
              {personalMenu.map((m) => (
                <MenuItem key={m}>{m}</MenuItem>
              ))}
            </SideMenu>
            <Content>
              <TabsBar>
                {pageTabs.map((t) => (
                  <PageTab key={t} $active={t === 'Global'}>{t}</PageTab>
                ))}
              </TabsBar>
              <RulesCard>
                <RowsClip>
                  {detectors.map((d) => (
                    <Row key={d.name}>
                      <NameCell>{d.name}</NameCell>
                      <TagCell>{d.tags && <Tag>Specific</Tag>}</TagCell>
                      <TagCell>{d.tags && <Tag><ServerIcon />Data storage</Tag>}</TagCell>
                      <TagCell>{d.tags && <Tag $green>Yes</Tag>}</TagCell>
                      <Cell>0</Cell>
                      <Cell $muted={!d.on}>{d.score}</Cell>
                      <Toggle $on={d.on} />
                    </Row>
                  ))}
                </RowsClip>
                <Pager>
                  <PagerLabel>Secrets detectors</PagerLabel>
                  <CountChip>324</CountChip>
                  <PagerNav>
                    <span>1-10 of 324</span>
                    <PagerArrow $w={90} $dim><ChevronLeft size={24} /></PagerArrow>
                    <PageNum $active $w={64}>1</PageNum>
                    <PageNum $w={78}>2</PageNum>
                    <PageNum $w={66}>3</PageNum>
                    <PageNum $w={56}>...</PageNum>
                    <PageNum $w={68}>33</PageNum>
                    <PagerArrow $w={90}><ChevronRight size={24} /></PagerArrow>
                  </PagerNav>
                </Pager>
              </RulesCard>

              <ExclusionsCard>
                <CardBlock>
                  <SectionTitle $pt={31}>Filepath exclusions</SectionTitle>
                  <InfoBox $h={157}>
                    <InfoDot>i</InfoDot>
                    <div>
                      Patterns of files<br />
                      Filepath exclusions<br />
                      Note that <strong>new</strong>
                    </div>
                  </InfoBox>
                  <FieldSpacer />
                  <TextField>**/test_A/*</TextField>
                  <Buttons>
                    <FormButton $primary>Save</FormButton>
                    <FormButton>Reset</FormButton>
                  </Buttons>
                </CardBlock>
                <Divider />
                <CardBlock>
                  <FieldTitle>Test a filepath against</FieldTitle>
                  <TextField $filled>my_path/my_file</TextField>
                </CardBlock>
              </ExclusionsCard>

              <WorkflowCard>
                <CardBlock>
                  <SectionTitle $pt={38}>Remediation workflow</SectionTitle>
                  <InfoBox $h={128}>
                    <InfoDot>i</InfoDot>
                    <div>
                      Remediation workflows are displayed on the incident detail views. Here you can personalize the workflow shown on the secret incidents page. You can either display the workflow recommended by GitGuardian, or create your own custom workflow.
                    </div>
                  </InfoBox>
                  <WorkflowBox>
                    <RadioMark />
                    GitGuardian remediation workflow
                    <ChevronDown size={26} color="#10214a" />
                  </WorkflowBox>
                  <CreateBox>+ Create custom workflow</CreateBox>
                </CardBlock>
              </WorkflowCard>
            </Content>
          </Columns>
        </Main>

        <Overlay>
          <Modal>
            <ModalTitle>Cheat sheet for filepath exclusions</ModalTitle>
            <SheetRow>
              <div />
              <div />
              <div />
              <PathCell>src/test.py/README</PathCell>
            </SheetRow>
            {sheet.map((row) => (
              <SheetRow key={row.glob}>
                <Pattern>{row.glob}</Pattern>
                <RegexCell><Regex>{row.regex}</Regex></RegexCell>
                <PathCell>{row.hit.map((h) => <div key={h}>{h}</div>)}</PathCell>
                <PathCell>{row.miss.map((h) => <div key={h}>{h}</div>)}</PathCell>
              </SheetRow>
            ))}
            <Note>
              Note: If you misuse the glob-style pattern, GitGuardian will infer and correct your input. For instance:<br />
              - <strong>src/**/**/**/tests/</strong> will be simplified as <strong>src/**/test</strong><br />
              - <strong>**/src/**</strong> will be simplified as <strong>src/</strong>
            </Note>
            <ModalFooter>
              <GotIt>Got it!</GotIt>
            </ModalFooter>
          </Modal>
        </Overlay>
      </Body>
    </Page>
  );
};

export default App;
